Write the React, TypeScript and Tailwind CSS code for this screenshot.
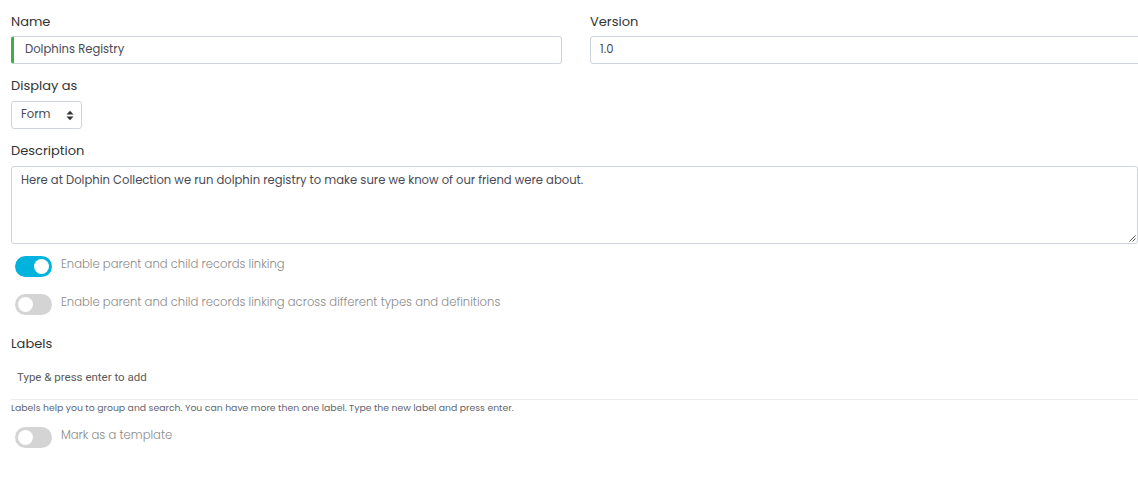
import React from "react";

function Toggle({ on }: { on: boolean }) {
  return (
    <div
      className={
        "relative w-[37px] h-[21px] rounded-full shrink-0 " +
        (on ? "bg-[#00b3df]" : "bg-[#d4d4d4]")
      }
    >
      <div
        className={
          "absolute top-[3px] w-[15px] h-[15px] rounded-full bg-white " +
          (on ? "left-[19px]" : "left-[3px]")
        }
      />
    </div>
  );
}

function ToggleRow({ on, label }: { on: boolean; label: string }) {
  return (
    <div className="flex items-center ml-[4px] h-[21px]">
      <Toggle on={on} />
      <span className="ml-[9px] text-[11.6px] text-[#8a8a8a] font-light leading-[21px] -mt-[5px]">
        {label}
      </span>
    </div>
  );
}

export default function App() {
  return (
    <div
      className="w-[1138px] h-[477px] overflow-hidden bg-white"
      style={{ fontFamily: 'Poppins, "Noto Sans", sans-serif' }}
    >
      <div className="ml-[11px] w-[1130px] pt-[12px]">
        <div className="grid grid-cols-2 gap-x-[28px]">
          <div>
            <div className="text-[13px] leading-[20px] text-[#333]">Name</div>
            <div className="mt-[4px] h-[28px] border border-[#ced4da] border-l-[3px] border-l-[#3fae49] rounded-[3px] flex items-center pl-[11px] text-[11.6px] text-[#4a4a55]">
              Dolphins Registry
            </div>
          </div>
          <div>
            <div className="text-[13px] leading-[20px] text-[#333]">Version</div>
            <div className="mt-[4px] h-[28px] border border-[#ced4da] rounded-[3px] flex items-center pl-[9px] text-[11.6px] text-[#4a4a55]">
              1.0
            </div>
          </div>
        </div>

        <div className="mt-[12px] text-[13px] leading-[20px] text-[#333]">Display as</div>
        <div className="mt-[5px] w-[71px] h-[28px] border border-[#ced4da] rounded-[3px] flex items-center pl-[9px] text-[11.6px] text-[#4a4a55] relative">
          Form
          <svg
            className="absolute left-[54px] top-[8px]"
            width="8"
            height="11"
            viewBox="0 0 8 11"
          >
            <path d="M0.5 4.5 L4 0.8 L7.5 4.5 Z" fill="#333" />
            <path d="M0.5 6.5 L4 10.2 L7.5 6.5 Z" fill="#333" />
          </svg>
        </div>

        <div className="mt-[12px] text-[13px] leading-[20px] text-[#333]">Description</div>
        <div className="mt-[5px] h-[78px] w-[1127px] border border-[#ced4da] rounded-[3px] pl-[9px] pt-[3px] text-[11.6px] leading-[20px] text-[#4a4a55] relative">
          Here at Dolphin Collection we run dolphin registry to make sure we know of our friend were about.
          <svg
            className="absolute right-[1px] bottom-[1px]"
            width="7"
            height="7"
            viewBox="0 0 7 7"
          >
            <path d="M6.5 0.5 L0.5 6.5 M6.5 3.5 L3.5 6.5" stroke="#555" strokeWidth="1" />
          </svg>
        </div>

        <div className="mt-[12px]">
          <ToggleRow on={true} label="Enable parent and child records linking" />
        </div>
        <div className="mt-[17px]">
          <ToggleRow
            on={false}
            label="Enable parent and child records linking across different types and definitions"
          />
        </div>

        <div className="mt-[19px] text-[13px] leading-[20px] text-[#333]">Labels</div>
        <div
          className="h-[46px] border-b border-[#e9ecef] flex items-center pl-[6px] pt-[2px] text-[11.5px] text-[#5a5a5a]"
          style={{ fontFamily: 'Roboto, "Liberation Sans", sans-serif' }}
        >
          Type &amp; press enter to add
        </div>
        <div className="mt-[3px] text-[9.3px] leading-[10px] text-[#5f6670]">
          Labels help you to group and search. You can have more then one label. Type the new label and press enter.
        </div>

        <div className="mt-[14px]">
          <ToggleRow on={false} label="Mark as a template" />
        </div>
      </div>
    </div>
  );
}
